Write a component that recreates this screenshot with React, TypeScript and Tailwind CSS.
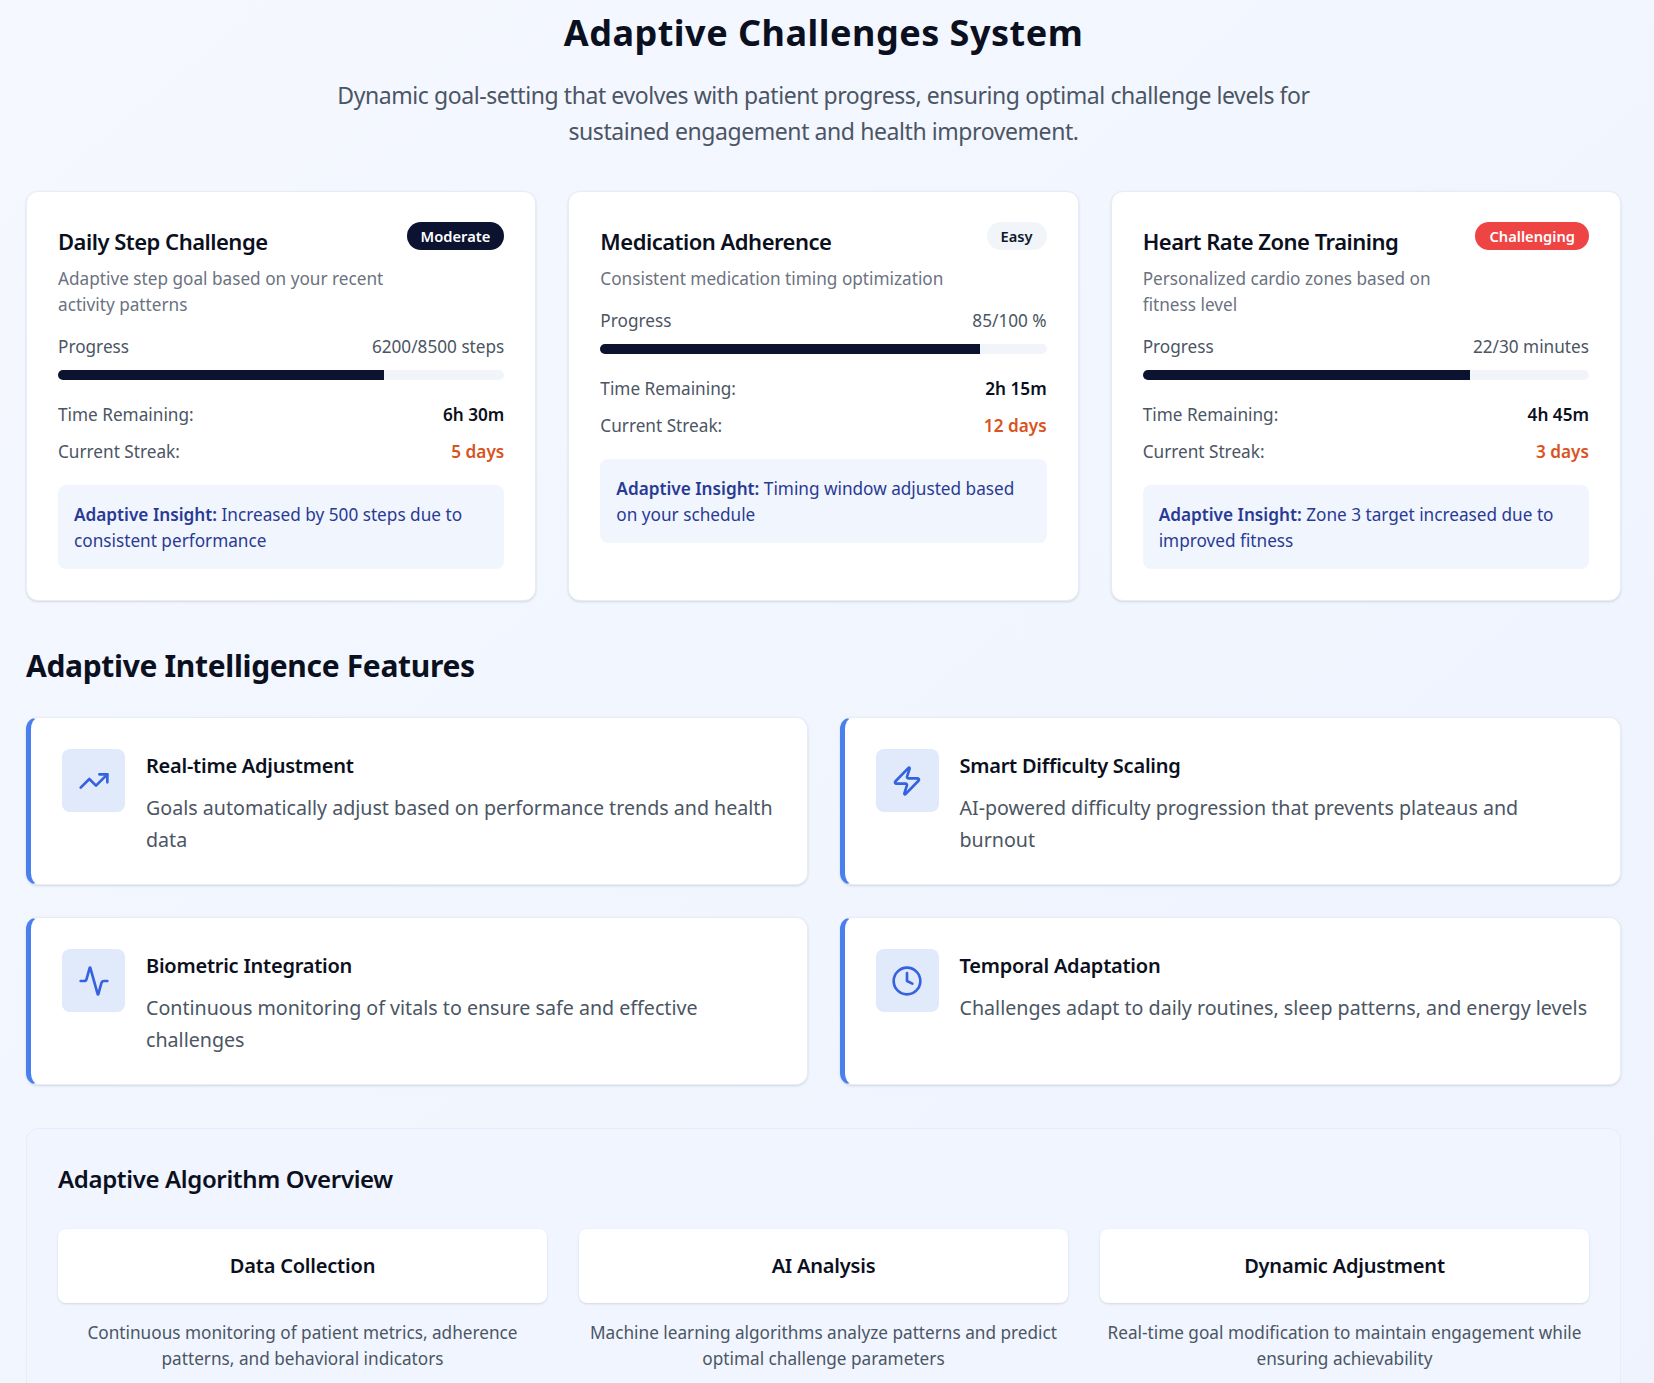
import React from 'react';
import { TrendingUp, Zap, Activity, Clock } from 'lucide-react';

const challenges = [
  { title: 'Daily Step Challenge', badge: 'Moderate', badgeCls: 'bg-[#0b1330] text-white', desc: 'Adaptive step goal based on your recent activity patterns', progress: '6200/8500 steps', pct: 'w-[73%]', time: '6h 30m', streak: '5 days', insight: 'Increased by 500 steps due to consistent performance' },
  { title: 'Medication Adherence', badge: 'Easy', badgeCls: 'bg-[#f1f5f9] text-[#0f172a]', desc: 'Consistent medication timing optimization', progress: '85/100 %', pct: 'w-[85%]', time: '2h 15m', streak: '12 days', insight: 'Timing window adjusted based on your schedule' },
  { title: 'Heart Rate Zone Training', badge: 'Challenging', badgeCls: 'bg-[#ef4444] text-white', desc: 'Personalized cardio zones based on fitness level', progress: '22/30 minutes', pct: 'w-[73.3%]', time: '4h 45m', streak: '3 days', insight: 'Zone 3 target increased due to improved fitness' },
];

const features = [
  { icon: TrendingUp, title: 'Real-time Adjustment', desc: 'Goals automatically adjust based on performance trends and health data' },
  { icon: Zap, title: 'Smart Difficulty Scaling', desc: 'AI-powered difficulty progression that prevents plateaus and burnout' },
  { icon: Activity, title: 'Biometric Integration', desc: 'Continuous monitoring of vitals to ensure safe and effective challenges' },
  { icon: Clock, title: 'Temporal Adaptation', desc: 'Challenges adapt to daily routines, sleep patterns, and energy levels' },
];

const steps = [
  { title: 'Data Collection', desc: 'Continuous monitoring of patient metrics, adherence patterns, and behavioral indicators' },
  { title: 'AI Analysis', desc: 'Machine learning algorithms analyze patterns and predict optimal challenge parameters' },
  { title: 'Dynamic Adjustment', desc: 'Real-time goal modification to maintain engagement while ensuring achievability' },
];

export default function App() {
  return (
    <main className="w-full h-[1383px] overflow-hidden bg-linear-to-br from-[#f5f8ff] to-[#eef3fe] pl-[26px] pr-[33px] font-['Noto_Sans',sans-serif] text-[#0b1020]">
      <h1 className="text-4xl font-bold text-center pt-[13px] leading-10 tracking-[0.5px]">Adaptive Challenges System</h1>
      <p className="mt-[24px] mx-auto w-[1024px] text-center text-[23px] tracking-[-0.42px] leading-[36px] text-[#4b5563]">
        Dynamic goal-setting that evolves with patient progress, ensuring optimal challenge levels for sustained engagement and health improvement.
      </p>

      <div className="grid grid-cols-3 gap-8 mt-[42px]">
        {challenges.map((c) => (
          <div key={c.title} className="bg-white rounded-xl border border-[#e8edf5] shadow-sm px-[31px] pt-[31px] h-[410px]">
            <div className="flex justify-between items-start">
              <div className="flex-1 pr-4 pt-[2px]">
                <h3 className="text-[22px] tracking-[-0.5px] font-semibold leading-8">{c.title}</h3>
                <p className="text-[17.2px] leading-[26px] text-[#6b7280] mt-[9px]">{c.desc}</p>
              </div>
              <span className={`${c.badgeCls} -mt-[1px] rounded-full px-[14px] py-[3px] text-[14.7px] leading-[22px] font-semibold shrink-0`}>{c.badge}</span>
            </div>
            <div className="flex justify-between text-[17.2px] leading-6 text-[#4b5563] mt-[17px]">
              <span>Progress</span>
              <span>{c.progress}</span>
            </div>
            <div className="h-[10px] rounded-full bg-[#f1f5f9] mt-[11px] overflow-hidden">
              <div className={`h-full bg-[#0b1330] ${c.pct}`}></div>
            </div>
            <div className="flex justify-between text-[17.2px] leading-6 mt-[23px]">
              <span className="text-[#4b5563]">Time Remaining:</span>
              <span className="font-semibold">{c.time}</span>
            </div>
            <div className="flex justify-between text-[17.2px] leading-6 mt-[13px]">
              <span className="text-[#4b5563]">Current Streak:</span>
              <span className="font-semibold text-[#d9541e]">{c.streak}</span>
            </div>
            <div className="bg-[#f0f5fe] rounded-lg px-4 pt-[17px] pb-[15px] mt-[21px] text-[17.2px] leading-[26px] text-[#2a3a94]">
              <span className="font-semibold">Adaptive Insight:</span> {c.insight}
            </div>
          </div>
        ))}
      </div>

      <h2 className="text-3xl leading-9 font-bold tracking-[-0.33px] mt-[47px]">Adaptive Intelligence Features</h2>

      <div className="grid grid-cols-2 gap-8 mt-[33px]">
        {features.map((f) => (
          <div key={f.title} className="bg-white rounded-xl border border-[#e8edf5] border-l-[5px] border-l-[#4a80ee] shadow-sm h-[168px] pl-[31px] pr-[31px] pt-[31px] flex gap-[21px]">
            <div className="w-[63px] h-[63px] rounded-lg bg-[#e1eafa] flex items-center justify-center shrink-0">
              <f.icon className="w-8 h-8 text-[#3563e0]" />
            </div>
            <div className="pt-[3px]">
              <h3 className="text-xl font-semibold leading-7 tracking-[-0.24px]">{f.title}</h3>
              <p className="text-[19.65px] leading-8 text-[#4b5563] mt-[12px]">{f.desc}</p>
            </div>
          </div>
        ))}
      </div>

      <section className="mt-[43px] bg-[#f0f5ff] rounded-xl border border-[#e8edf5] px-[31px] pt-[31px] pb-[31px]">
        <h3 className="text-2xl font-semibold leading-8 mt-[3px] tracking-[-0.35px]">Adaptive Algorithm Overview</h3>
        <div className="grid grid-cols-3 gap-8 mt-[34px]">
          {steps.map((s) => (
            <div key={s.title} className="text-center">
              <div className="bg-white rounded-lg shadow-sm h-[74px] flex items-center justify-center text-xl font-semibold tracking-[-0.2px]">{s.title}</div>
              <p className="text-[17.2px] leading-[26px] text-[#4b5563] mt-[17px]">{s.desc}</p>
            </div>
          ))}
        </div>
      </section>
    </main>
  );
}
